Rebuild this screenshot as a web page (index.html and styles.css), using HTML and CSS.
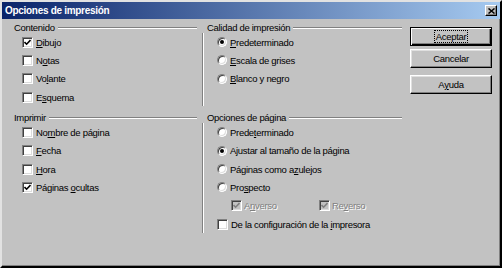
FILE: index.html
```html
<!DOCTYPE html>
<html lang="es">
<head>
    <meta charset="UTF-8">
    <title>Opciones de impresión</title>
    <link rel="stylesheet" href="styles.css">
</head>
<body>
    <div class="window">
        <div class="titlebar">
            <span class="title">Opciones de impresión</span>
            <span class="close"><svg width="7" height="6" viewBox="0 0 7 6"><path d="M0.5 0.5 L6.5 5.5 M6.5 0.5 L0.5 5.5" stroke="#000" stroke-width="1.5" fill="none"/></svg></span>
        </div>
        <div class="content">
            <div class="groups">
                <!-- Contenido -->
                <div class="group">
                    <div class="legend">Contenido</div>
                    <div class="items">
                        <div class="row"><span class="check"><svg width="7" height="7" viewBox="0 0 7 7"><path d="M0.5 3 L2.6 5.2 L6.5 1" stroke="#000" stroke-width="1.6" fill="none"/></svg></span><span><u>D</u>ibujo</span></div>
                        <div class="row"><span class="check"></span><span>N<u>o</u>tas</span></div>
                        <div class="row"><span class="check"></span><span>Vo<u>l</u>ante</span></div>
                        <div class="row"><span class="check"></span><span>E<u>s</u>quema</span></div>
                    </div>
                </div>
                <!-- Calidad de impresión -->
                <div class="group sep">
                    <div class="legend">Calidad de impresión</div>
                    <div class="items">
                        <div class="row"><span class="radio on"></span><span><u>P</u>redeterminado</span></div>
                        <div class="row"><span class="radio"></span><span><u>E</u>scala de grises</span></div>
                        <div class="row"><span class="radio"></span><span><u>B</u>lanco y negro</span></div>
                    </div>
                </div>
                <!-- Imprimir -->
                <div class="group">
                    <div class="legend">Imprimir</div>
                    <div class="items">
                        <div class="row"><span class="check"></span><span>No<u>m</u>bre de página</span></div>
                        <div class="row"><span class="check"></span><span><u>F</u>echa</span></div>
                        <div class="row"><span class="check"></span><span><u>H</u>ora</span></div>
                        <div class="row"><span class="check"><svg width="7" height="7" viewBox="0 0 7 7"><path d="M0.5 3 L2.6 5.2 L6.5 1" stroke="#000" stroke-width="1.6" fill="none"/></svg></span><span>Páginas <u>o</u>cultas</span></div>
                    </div>
                </div>
                <!-- Opciones de página -->
                <div class="group sep">
                    <div class="legend">Opciones de página</div>
                    <div class="items">
                        <div class="row"><span class="radio"></span><span>Prede<u>t</u>erminado</span></div>
                        <div class="row"><span class="radio on"></span><span>A<u>j</u>ustar al tamaño de la página</span></div>
                        <div class="row"><span class="radio"></span><span>Páginas como a<u>z</u>ulejos</span></div>
                        <div class="row"><span class="radio"></span><span>Pro<u>s</u>pecto</span></div>
                        <div class="row sub">
                            <span class="opt first"><span class="check off"><svg width="7" height="7" viewBox="0 0 7 7"><path d="M0.5 3 L2.6 5.2 L6.5 1" stroke="#808080" stroke-width="1.6" fill="none"/></svg></span><span class="disabled">A<u>n</u>verso</span></span>
                            <span class="opt"><span class="check off"><svg width="7" height="7" viewBox="0 0 7 7"><path d="M0.5 3 L2.6 5.2 L6.5 1" stroke="#808080" stroke-width="1.6" fill="none"/></svg></span><span class="disabled">Re<u>v</u>erso</span></span>
                        </div>
                        <div class="row"><span class="check"></span><span>De la configuración de la <u>i</u>mpresora</span></div>
                    </div>
                </div>
            </div>
            <div class="buttons">
                <div class="btn default"><span class="focus">Aceptar</span></div>
                <div class="btn">Cancelar</div>
                <div class="btn help">A<u>y</u>uda</div>
            </div>
        </div>
    </div>
</body>
</html>
```
FILE: styles.css
```css
html, body {
    margin: 0;
    padding: 0;
}
.window {
    width: 502px;
    height: 268px;
    box-sizing: border-box;
    background: #c2c2c2;
    border: 2px solid;
    border-color: #e2e2e2 #000 #000 #e2e2e2;
    box-shadow: inset -1px -1px #808080;
    font-family: "Liberation Sans", Arial, sans-serif;
    font-size: 9.5px;
    letter-spacing: -0.3px;
    color: #000;
}
.titlebar {
    height: 17px;
    display: flex;
    align-items: center;
    padding: 0 3px;
    background: linear-gradient(to right, #0a246a, #a6caf0);
}
.title {
    color: #fff;
    font-weight: bold;
    font-size: 10px;
    letter-spacing: -0.3px;
}
.close {
    margin-left: auto;
    width: 12px;
    height: 11px;
    box-sizing: border-box;
    background: #c2c2c2;
    border: 1px solid;
    border-color: #fff #000 #000 #fff;
    box-shadow: inset -1px -1px #808080;
    display: flex;
    align-items: center;
    justify-content: center;
}
.content {
    display: flex;
    padding: 3px 0 0 12px;
}
.groups {
    display: grid;
    grid-template-columns: 183px 200px;
    column-gap: 5px;
    row-gap: 6px;
    align-content: start;
}
.group {
    display: flex;
    flex-direction: column;
}
.legend {
    display: flex;
    align-items: center;
    height: 12px;
    line-height: 12px;
    white-space: nowrap;
}
.legend::after {
    content: "";
    flex: 1;
    margin-left: 3px;
    border-top: 1px solid #808080;
    border-bottom: 1px solid #fff;
}
.sep .legend {
    padding-left: 5px;
}
.items {
    flex: 1;
    margin-top: -1px;
}
.sep .items {
    border-left: 1px solid #808080;
    box-shadow: inset 1px 0 #fff;
}
.row {
    height: 18.33px;
    display: flex;
    align-items: center;
    white-space: nowrap;
    padding-left: 8px;
}
.sep .row {
    padding-left: 14px;
}
.sep .row.sub {
    padding-left: 28px;
}
.opt {
    display: flex;
    align-items: center;
}
.opt.first {
    width: 88px;
}
.check {
    width: 11px;
    height: 11px;
    box-sizing: border-box;
    flex: none;
    margin-right: 3px;
    background: #fff;
    border: 1px solid;
    border-color: #808080 #fff #fff #808080;
    box-shadow: inset 1px 1px #404040, inset -1px -1px #dcdcdc;
    display: flex;
    align-items: center;
    justify-content: center;
}
.check svg {
    display: block;
}
.check.off {
    background: #c2c2c2;
    margin-right: 2px;
}
.radio {
    width: 10px;
    height: 10px;
    box-sizing: border-box;
    flex: none;
    margin-right: 3px;
    border-radius: 50%;
    background: #fff;
    border: 1px solid;
    border-color: #808080 #fff #fff #808080;
    box-shadow: inset 1px 1px #404040, inset -1px -1px #dcdcdc;
    display: flex;
    align-items: center;
    justify-content: center;
}
.radio.on::after {
    content: "";
    width: 4px;
    height: 4px;
    border-radius: 50%;
    background: #000;
}
.disabled {
    color: #808080;
    text-shadow: 1px 1px #fff;
}
.buttons {
    margin-left: 8px;
    padding-top: 5px;
    width: 82px;
    display: flex;
    flex-direction: column;
}
.btn {
    height: 19px;
    box-sizing: border-box;
    display: flex;
    align-items: center;
    justify-content: center;
    background: #c2c2c2;
    border: 1px solid;
    border-color: #fff #000 #000 #fff;
    box-shadow: inset -1px -1px #808080, inset 1px 1px #dfdfdf;
    margin-bottom: 3px;
}
.btn.default {
    border-color: #000;
    box-shadow: inset 1px 1px #fff, inset -1px -1px #000, inset -2px -2px #808080;
}
.btn.help {
    margin-top: 4px;
}
.focus {
    outline: 1px dotted #000;
    padding: 0 1px;
    line-height: 11px;
}
```
